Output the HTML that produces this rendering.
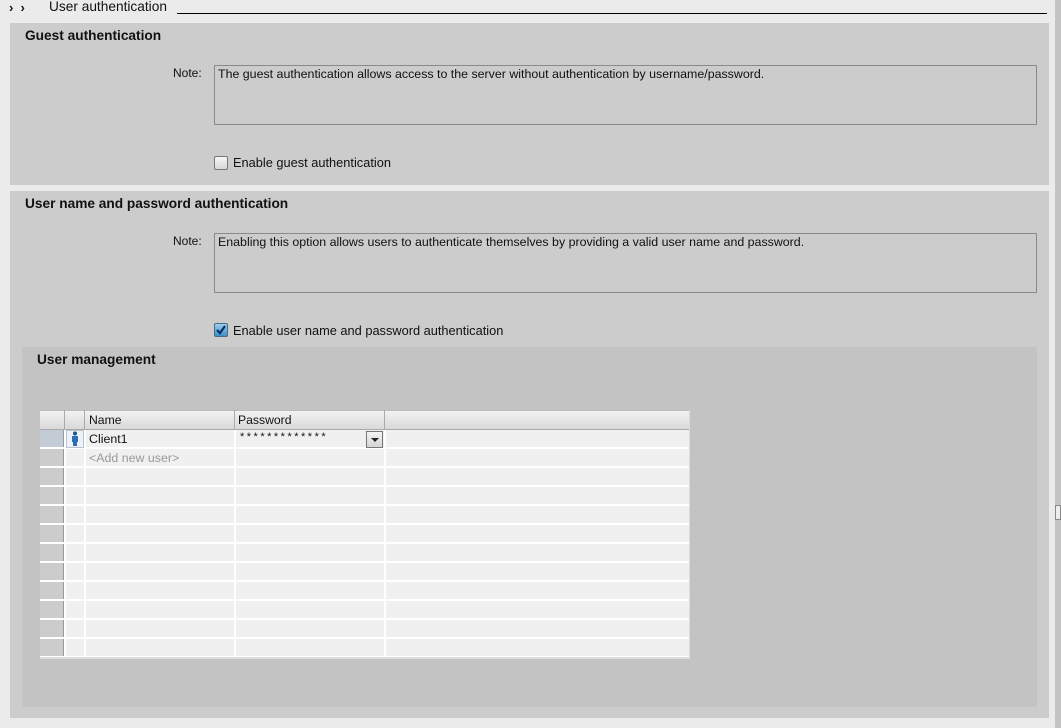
<!DOCTYPE html>
<html><head><meta charset="utf-8"><style>
*{margin:0;padding:0;box-sizing:border-box}
body{width:1061px;height:728px;background:#ebebeb;font-family:"Liberation Sans",sans-serif;font-size:12.4px;color:#111;position:relative;overflow:hidden}
.a{position:absolute}
.panel{background:#cccccc}
.h{font-weight:bold;font-size:13.7px}
.note{background:#cccccc;border:1px solid #8a8a8a;padding:1px 3px;font-size:12.4px}
.cb{width:14px;height:14px;border:1px solid #777;border-radius:2px;background:linear-gradient(#f6f6f6,#d8d8d8)}
.row{position:absolute;left:40px;width:650px;height:19px;background:#f0f0f0;border-bottom:2px solid #fff}
.rh{position:absolute;left:0;top:0;width:24px;height:17px;background:#cccccc;border-right:1px solid #999}
.v{position:absolute;top:0;width:2px;height:19px;background:#fff}
</style></head><body>
<div class="a" style="left:9px;top:0px;font-size:13px;font-weight:bold">›&nbsp;&nbsp;›</div>
<div class="a" style="left:49px;top:-1px;font-size:13.7px">User authentication</div>
<div class="a" style="left:177px;top:13px;width:870px;height:1px;background:#000"></div>
<div class="a" style="left:1055px;top:0;width:6px;height:728px;background:#c4c4c4"></div>
<div class="a" style="left:1055px;top:505px;width:6px;height:15px;background:#ececec;border:1px solid #888"></div>

<div class="a panel" style="left:10px;top:23px;width:1039px;height:162px"></div>
<div class="a h" style="left:25px;top:28px">Guest authentication</div>
<div class="a" style="left:173px;top:66px;font-size:12px">Note:</div>
<div class="a note" style="left:214px;top:65px;width:823px;height:60px">The guest authentication allows access to the server without authentication by username/password.</div>
<div class="a cb" style="left:214px;top:156px"></div>
<div class="a" style="left:233px;top:155px;font-size:12.8px">Enable guest authentication</div>

<div class="a panel" style="left:10px;top:191px;width:1039px;height:527px"></div>
<div class="a h" style="left:25px;top:196px">User name and password authentication</div>
<div class="a" style="left:173px;top:234px;font-size:12px">Note:</div>
<div class="a note" style="left:214px;top:233px;width:823px;height:60px">Enabling this option allows users to authenticate themselves by providing a valid user name and password.</div>
<div class="a cb" style="left:214px;top:323px;background:linear-gradient(#9ad0ee,#3d8fc4);border-color:#4a6a85"><svg width="12" height="12" viewBox="0 0 12 12" style="position:absolute;left:0;top:0"><path d="M2 6 L5 9 L10 2" stroke="#0c2f66" stroke-width="2.2" fill="none"/></svg></div>
<div class="a" style="left:233px;top:323px;font-size:12.8px">Enable user name and password authentication</div>

<div class="a" style="left:22px;top:347px;width:1015px;height:360px;background:#c3c3c3"></div>
<div class="a h" style="left:37px;top:352px">User management</div>

<div class="a" style="left:40px;top:410px;width:650px;height:20px;background:linear-gradient(#f2f2f2,#d9d9d9);border-top:1px solid #bbb;border-bottom:1px solid #aaa"></div>
<div class="a" style="left:64px;top:410px;width:1px;height:20px;background:#aaa"></div>
<div class="a" style="left:84px;top:410px;width:1px;height:20px;background:#aaa"></div>
<div class="a" style="left:234px;top:410px;width:1px;height:20px;background:#aaa"></div>
<div class="a" style="left:384px;top:410px;width:1px;height:20px;background:#aaa"></div>
<div class="a" style="left:89px;top:413px;font-size:12.2px">Name</div>
<div class="a" style="left:238px;top:413px;font-size:12.2px">Password</div>

<div class="row" style="top:430px"><div class="rh" style="background:#c3ccd6"></div><div class="v" style="left:24px"></div><div class="v" style="left:44px"></div><div class="v" style="left:194px"></div><div class="v" style="left:344px"></div></div>
<div class="row" style="top:449px"><div class="rh"></div><div class="v" style="left:24px"></div><div class="v" style="left:44px"></div><div class="v" style="left:194px"></div><div class="v" style="left:344px"></div></div>
<div class="row" style="top:468px"><div class="rh"></div><div class="v" style="left:24px"></div><div class="v" style="left:44px"></div><div class="v" style="left:194px"></div><div class="v" style="left:344px"></div></div>
<div class="row" style="top:487px"><div class="rh"></div><div class="v" style="left:24px"></div><div class="v" style="left:44px"></div><div class="v" style="left:194px"></div><div class="v" style="left:344px"></div></div>
<div class="row" style="top:506px"><div class="rh"></div><div class="v" style="left:24px"></div><div class="v" style="left:44px"></div><div class="v" style="left:194px"></div><div class="v" style="left:344px"></div></div>
<div class="row" style="top:525px"><div class="rh"></div><div class="v" style="left:24px"></div><div class="v" style="left:44px"></div><div class="v" style="left:194px"></div><div class="v" style="left:344px"></div></div>
<div class="row" style="top:544px"><div class="rh"></div><div class="v" style="left:24px"></div><div class="v" style="left:44px"></div><div class="v" style="left:194px"></div><div class="v" style="left:344px"></div></div>
<div class="row" style="top:563px"><div class="rh"></div><div class="v" style="left:24px"></div><div class="v" style="left:44px"></div><div class="v" style="left:194px"></div><div class="v" style="left:344px"></div></div>
<div class="row" style="top:582px"><div class="rh"></div><div class="v" style="left:24px"></div><div class="v" style="left:44px"></div><div class="v" style="left:194px"></div><div class="v" style="left:344px"></div></div>
<div class="row" style="top:601px"><div class="rh"></div><div class="v" style="left:24px"></div><div class="v" style="left:44px"></div><div class="v" style="left:194px"></div><div class="v" style="left:344px"></div></div>
<div class="row" style="top:620px"><div class="rh"></div><div class="v" style="left:24px"></div><div class="v" style="left:44px"></div><div class="v" style="left:194px"></div><div class="v" style="left:344px"></div></div>
<div class="row" style="top:639px"><div class="rh"></div><div class="v" style="left:24px"></div><div class="v" style="left:44px"></div><div class="v" style="left:194px"></div><div class="v" style="left:344px"></div></div>
<div class="a" style="left:40px;top:657px;width:650px;height:2px;background:#ddd"></div>
<div class="a" style="left:689px;top:410px;width:1px;height:249px;background:#ddd"></div>

<div class="a" style="left:66px;top:430px;width:18px;height:18px;border:1px solid #b8c4d0;background:#eef2f6"></div>
<svg class="a" style="left:70px;top:431px" width="10" height="16" viewBox="0 0 10 16"><circle cx="5" cy="2.5" r="2" fill="#1a4f8a"/><path d="M2 5 H8 V11 H7 V15 H3 V11 H2 Z" fill="#2a6fb5"/></svg>
<div class="a" style="left:89px;top:432px;font-size:12.4px">Client1</div>
<div class="a" style="left:240px;top:431px;font-size:11px;letter-spacing:2.5px">*************</div>
<div class="a" style="left:366px;top:431px;width:17px;height:17px;border:1px solid #777;background:linear-gradient(#f4f4f4,#d4d4d4)"><div style="position:absolute;left:4px;top:6px;width:0;height:0;border-left:4px solid transparent;border-right:4px solid transparent;border-top:4px solid #222"></div></div>
<div class="a" style="left:89px;top:451px;font-size:12.4px;color:#999">&lt;Add new user&gt;</div>
</body></html>
